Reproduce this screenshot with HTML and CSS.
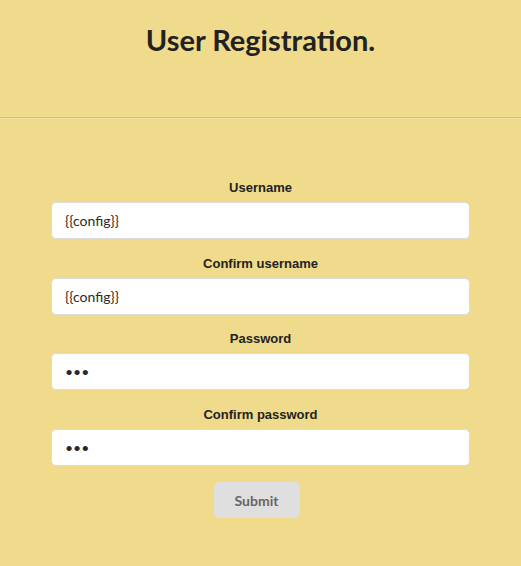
FILE: index.html
```html
<!DOCTYPE html>
<html>
<head>
<meta charset="utf-8">
<link rel="stylesheet" href="styles.css">
</head>
<body>
<header class="header">
  <h1 class="title">User Registration.</h1>
</header>
<hr class="divider">
<form class="form">
  <div class="field">
    <label class="label">Username</label>
    <input class="input" type="text" value="{{config}}">
  </div>
  <div class="field">
    <label class="label">Confirm username</label>
    <input class="input" type="text" value="{{config}}">
  </div>
  <div class="field">
    <label class="label">Password</label>
    <input class="input" type="password" value="abc">
  </div>
  <div class="field">
    <label class="label">Confirm password</label>
    <input class="input" type="password" value="abc">
  </div>
  <button class="submit" type="button">Submit</button>
</form>
</body>
</html>
```
FILE: styles.css
```css
html, body {
  margin: 0;
  padding: 0;
  background: #efdb8b;
  height: 100%;
}
body {
  font-family: "Lato", "Liberation Sans", sans-serif;
  color: #222;
}
.header {
  padding-top: 20px;
  height: 96px;
  box-sizing: border-box;
  text-align: center;
}
.title {
  margin: 0;
  font-family: "Lato", sans-serif;
  font-weight: 700;
  font-size: 29px;
  line-height: 40px;
  color: #222;
}
.divider {
  margin: 21px 0 0 0;
  border: 0;
  border-top: 1px solid #d2c07a;
  border-bottom: 1px solid #f3e3a0;
  height: 0;
}
.form {
  width: 419px;
  margin: 0 auto;
  padding-top: 61px;
  display: flex;
  flex-direction: column;
  align-items: center;
}
.field {
  width: 100%;
  display: flex;
  flex-direction: column;
  align-items: center;
  margin-bottom: 16.6px;
}
.label {
  font-family: "Liberation Sans", Arial, sans-serif;
  font-weight: 700;
  font-size: 13px;
  line-height: 16px;
  color: #222;
  margin-bottom: 6px;
}
.input {
  box-sizing: border-box;
  width: 100%;
  height: 37px;
  border: 1px solid #dcdcdc;
  border-radius: 5px;
  background: #fff;
  padding: 0 13px;
  font-family: "Lato", sans-serif;
  font-size: 14px;
  color: #2a2a2a;
  outline: none;
}
.submit {
  margin-top: 0;
  margin-right: 8px;
  width: 86px;
  height: 36px;
  border: 0;
  border-radius: 5px;
  background: #dfdfe0;
  color: #666;
  font-family: "Lato", sans-serif;
  font-weight: 700;
  font-size: 14px;
}
```
